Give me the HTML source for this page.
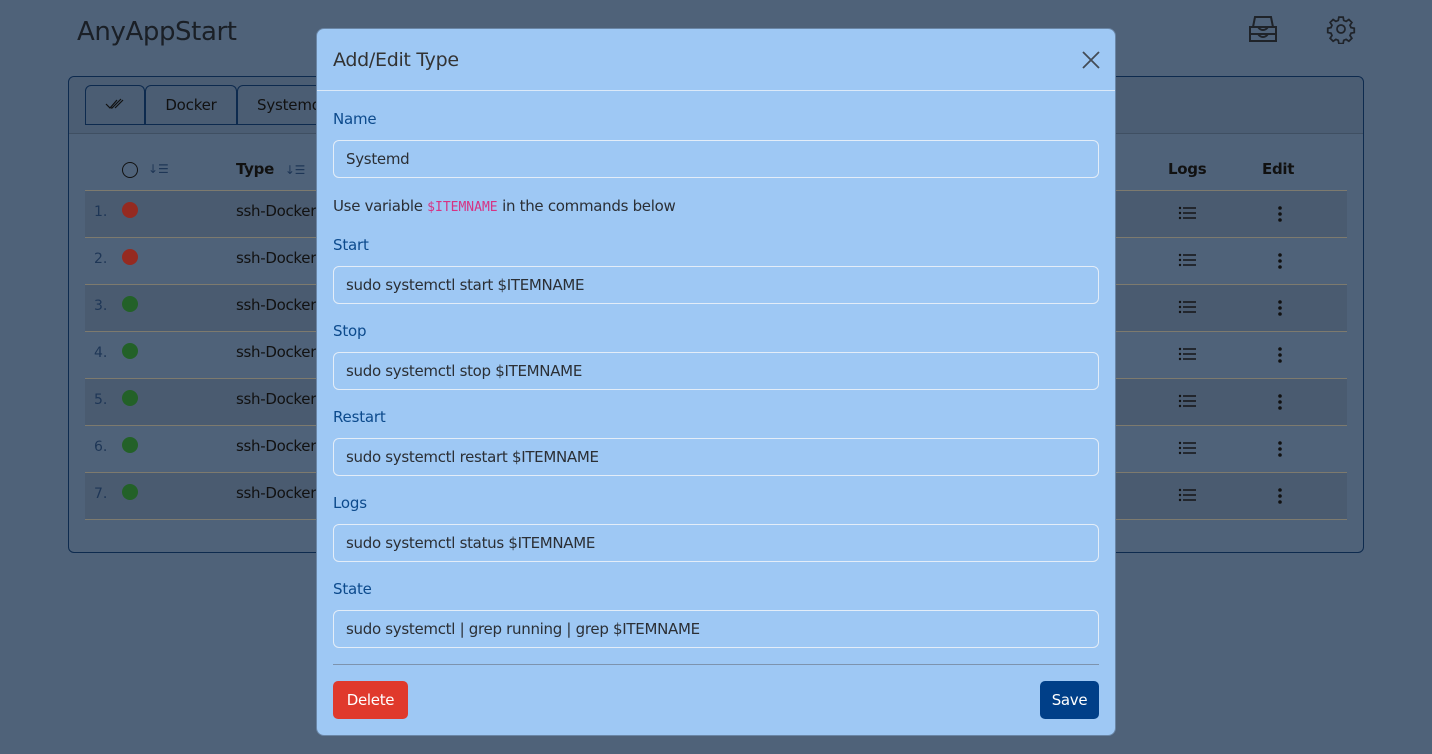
<!DOCTYPE html>
<html><head><meta charset="utf-8"><style>
*{box-sizing:border-box;margin:0;padding:0}
body{width:1432px;height:754px;overflow:hidden;background:#4f6279;font-family:"DejaVu Sans","Liberation Sans",sans-serif;position:relative;color:#111}
.title{position:absolute;left:77px;top:17px;font-size:26px;color:#1a1f26;letter-spacing:-0.4px}
.card{position:absolute;left:68px;top:76px;width:1296px;height:477px;border:1px solid #0d2a4e;border-radius:6px}
.chead{position:absolute;left:0;top:0;right:0;height:57px;background:#4b5d73;border-bottom:1px solid #3f4f62;border-radius:6px 6px 0 0}
.tab{position:absolute;top:8px;height:40px;border:1.5px solid #0d2a4e;border-bottom:none;border-radius:6px 6px 0 0;font-size:15px;line-height:38px;text-align:center;letter-spacing:-0.2px}
.tabline{position:absolute;left:16px;top:47px;width:250px;border-top:1.5px solid #0d2a4e}
.row{position:absolute;left:16px;width:1262px;height:47px;border-top:1px solid #7d7a6e}
.row.s{background:#4a5b70}
.num{position:absolute;left:9px;top:13px;font-size:14px;color:#1e3656}
.dot{position:absolute;left:37px;top:11px;width:16px;height:16px;border-radius:50%}
.typ{position:absolute;left:151px;top:11px;font-size:15px;letter-spacing:-0.3px}
.th{position:absolute;top:83px;font-weight:bold;font-size:15px;letter-spacing:-0.3px}
.modal{position:absolute;left:317px;top:29px;width:798px;height:706px;background:#9ec8f4;border-radius:7px;box-shadow:0 0 0 1px #6a86a6}
.mh{height:62px;border-bottom:1px solid #dbe9f8;padding:20px 16px;font-size:19px;color:#333;letter-spacing:-0.3px}
.lbl{position:absolute;left:16px;font-size:15px;color:#0c4a8c;letter-spacing:-0.2px}
.inp{position:absolute;left:16px;width:766px;height:38px;border:1px solid #e3edf8;border-radius:6px;padding:0 12px;line-height:36px;font-size:15px;color:#2b2f35;letter-spacing:-0.3px}
.btn{position:absolute;top:652px;height:38px;border-radius:5px;color:#fff;font-size:15px;line-height:38px;text-align:center;letter-spacing:-0.3px}
</style></head><body>
<div class="title">AnyAppStart</div>
<svg style="position:absolute;left:1248px;top:14px" width="30" height="30" viewBox="0 0 30 30" fill="none" stroke="#1f2329" stroke-width="2"><path d="M5 13 L7 3 H23 L25 13 Z M2 13 H10 Q12 16 15 16 Q18 16 20 13 H28 V20 H2 Z M2 20 V27 H28 V20 M10 20 Q12 23 15 23 Q18 23 20 20"/></svg>
<svg style="position:absolute;left:1326px;top:14px" width="30" height="30" viewBox="0 0 24 24" fill="none" stroke="#1f2329" stroke-width="1.4"><circle cx="12" cy="12" r="3.2"/><path d="M10.3 2.5h3.4l.5 2.6 1.9.8 2.2-1.5 2.4 2.4-1.5 2.2.8 1.9 2.6.5v3.4l-2.6.5-.8 1.9 1.5 2.2-2.4 2.4-2.2-1.5-1.900.8-.5 2.6h-3.4l-.5-2.6-1.9-.8-2.2 1.5-2.4-2.4 1.5-2.2-.8-1.9-2.6-.5v-3.4l2.6-.5.8-1.9-1.5-2.2 2.4-2.4 2.2 1.5 1.9-.8z"/></svg>
<div class="card">
 <div class="chead"></div>
 <div class="tab" style="left:16px;width:60px"><svg width="22" height="12" viewBox="0 0 22 12" fill="none" stroke="#111" stroke-width="1.2"><path d="M2 6l4 4 7-8M7 10l1 0 9-9M11 10l8-8"/></svg></div>
 <div class="tab" style="left:76px;width:92px">Docker</div>
 <div class="tab" style="left:168px;width:100px;text-align:left;padding-left:19px">Systemd</div>
 <div class="tabline"></div>
 <div style="position:absolute;left:53px;top:85px;width:16px;height:16px;border:1.5px solid #111;border-radius:50%"></div>
 <div style="position:absolute;left:79px;top:85px;font-size:12px;color:#1e3656">↓☰</div>
 <div class="th" style="left:167px">Type <span style="font-weight:normal;font-size:12px;color:#1e3656;margin-left:6px">↓☰</span></div>
 <div class="th" style="left:1099px">Logs</div>
 <div class="th" style="left:1193px">Edit</div>
 <div class="row s" style="top:113px"><span class="num">1.</span><span class="dot" style="background:#952a20"></span><span class="typ">ssh-Docker</span></div>
 <div class="row" style="top:160px"><span class="num">2.</span><span class="dot" style="background:#952a20"></span><span class="typ">ssh-Docker</span></div>
 <div class="row s" style="top:207px"><span class="num">3.</span><span class="dot" style="background:#236128"></span><span class="typ">ssh-Docker</span></div>
 <div class="row" style="top:254px"><span class="num">4.</span><span class="dot" style="background:#236128"></span><span class="typ">ssh-Docker</span></div>
 <div class="row s" style="top:301px"><span class="num">5.</span><span class="dot" style="background:#236128"></span><span class="typ">ssh-Docker</span></div>
 <div class="row" style="top:348px"><span class="num">6.</span><span class="dot" style="background:#236128"></span><span class="typ">ssh-Docker</span></div>
 <div class="row s" style="top:395px;border-bottom:1px solid #7d7a6e;height:48px"><span class="num">7.</span><span class="dot" style="background:#236128"></span><span class="typ">ssh-Docker</span></div>
 <svg style="position:absolute;left:1109px;top:128px" width="20" height="300" viewBox="0 0 20 300" fill="#111">
  <g id="l"><circle cx="2" cy="3" r="1.2"/><circle cx="2" cy="8" r="1.2"/><circle cx="2" cy="13" r="1.2"/><rect x="5" y="2.3" width="13" height="1.4"/><rect x="5" y="7.3" width="13" height="1.4"/><rect x="5" y="12.3" width="13" height="1.4"/></g>
  <use href="#l" y="47"/><use href="#l" y="94"/><use href="#l" y="141"/><use href="#l" y="188"/><use href="#l" y="235"/><use href="#l" y="282"/>
 </svg>
 <svg style="position:absolute;left:1208px;top:128px" width="6" height="300" viewBox="0 0 6 300" fill="#111">
  <g id="d"><circle cx="3" cy="3" r="1.8"/><circle cx="3" cy="9" r="1.8"/><circle cx="3" cy="15" r="1.8"/></g>
  <use href="#d" y="47"/><use href="#d" y="94"/><use href="#d" y="141"/><use href="#d" y="188"/><use href="#d" y="235"/><use href="#d" y="282"/>
 </svg>
</div>
<div class="modal">
 <div class="mh">Add/Edit Type</div>
 <svg style="position:absolute;left:765px;top:22px" width="18" height="18" viewBox="0 0 18 18" stroke="#444c56" stroke-width="1.8"><path d="M1 1L17 17M17 1L1 17"/></svg>
 <div class="lbl" style="top:81px">Name</div>
 <div class="inp" style="top:111px">Systemd</div>
 <div style="position:absolute;left:16px;top:168px;font-size:15px;color:#2b2f35;letter-spacing:-0.3px">Use variable <span style="font-family:'DejaVu Sans Mono',monospace;font-size:13px;color:#d63384;letter-spacing:0">$ITEMNAME</span> in the commands below</div>
 <div class="lbl" style="top:207px">Start</div>
 <div class="inp" style="top:237px">sudo systemctl start $ITEMNAME</div>
 <div class="lbl" style="top:293px">Stop</div>
 <div class="inp" style="top:323px">sudo systemctl stop $ITEMNAME</div>
 <div class="lbl" style="top:379px">Restart</div>
 <div class="inp" style="top:409px">sudo systemctl restart $ITEMNAME</div>
 <div class="lbl" style="top:465px">Logs</div>
 <div class="inp" style="top:495px">sudo systemctl status $ITEMNAME</div>
 <div class="lbl" style="top:551px">State</div>
 <div class="inp" style="top:581px">sudo systemctl | grep running | grep $ITEMNAME</div>
 <div style="position:absolute;left:16px;top:635px;width:766px;border-top:1px solid #7d93ad"></div>
 <div class="btn" style="left:16px;width:75px;background:#e0392c">Delete</div>
 <div class="btn" style="left:723px;width:59px;background:#003f88">Save</div>
</div>
</body></html>
